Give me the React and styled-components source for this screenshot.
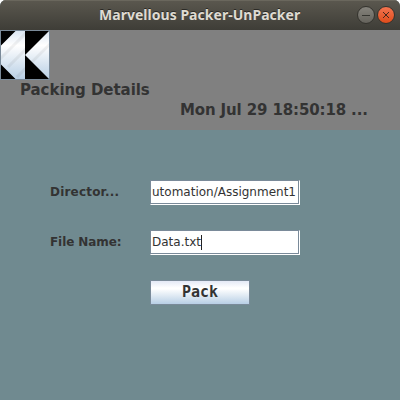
import React from "react";
import styled, { createGlobalStyle } from "styled-components";

const Global = createGlobalStyle`
  * { box-sizing: border-box; }
  body { margin: 0; background: #fff; }
`;

const Window = styled.div`
  width: 400px;
  height: 400px;
  display: flex;
  flex-direction: column;
  overflow: hidden;
  border-radius: 6px 6px 0 0;
  background: #708a90;
  color: #333;
  font-family: "DejaVu Sans", sans-serif;
`;

const TitleBar = styled.header`
  height: 30px;
  flex: none;
  display: grid;
  grid-template-columns: 99px 1fr auto;
  align-items: center;
  padding-right: 5px;
  background: linear-gradient(#5b584f, #3e3d37);
  box-shadow: inset 0 1px #6a675d;
`;

const Title = styled.h1`
  grid-column: 2;
  margin: 0;
  font: bold 14px/20px "Noto Sans", sans-serif;
  letter-spacing: 0.03px;
  white-space: nowrap;
  color: #dfdbd2;
  text-shadow: 0 -1px #2b2a26;
`;

const Controls = styled.div`
  display: flex;
  gap: 2px;
`;

const Control = styled.button`
  width: 18px;
  height: 18px;
  padding: 0;
  border: 1px solid #34332e;
  border-radius: 50%;
  background: ${(p) => (p.$close ? "linear-gradient(#f37450, #df4c1b)" : "linear-gradient(#85837c, #65635c)")};
  svg { display: block; }
`;

const Banner = styled.section`
  height: 100px;
  flex: none;
  display: flex;
  flex-direction: column;
  background: #808080;
`;

const BackButton = styled.button`
  width: 50px;
  height: 50px;
  flex: none;
  padding: 0;
  border: 1px solid #7a8a99;
  background: #000;
  svg { display: block; }
`;

const BannerText = styled.div`
  height: 20px;
  margin-left: ${(p) => p.$indent}px;
  font-size: 15px;
  line-height: 20px;
  font-weight: bold;
  letter-spacing: ${(p) => p.$tracking || 0}px;
  white-space: nowrap;
`;

const Form = styled.form`
  display: grid;
  grid-template-columns: 100px 150px;
  grid-auto-rows: 25px;
  row-gap: 25px;
  padding: 50px 0 0 50px;
`;

const Label = styled.label`
  font-size: 12px;
  line-height: 25px;
  font-weight: bold;
  letter-spacing: ${(p) => p.$tracking || 0}px;
  white-space: nowrap;
`;

const Field = styled.div`
  height: 25px;
  display: flex;
  align-items: center;
  justify-content: ${(p) => (p.$scrolled ? "flex-end" : "flex-start")};
  overflow: hidden;
  padding: 0 3px 0 1px;
  border: 1px solid #fff;
  border-top-color: #7a8a99;
  border-left-color: #7a8a99;
  background: #fff;
  box-shadow: inset -1px -1px #7a8a99;
  font-size: 12px;
  line-height: 23px;
  white-space: nowrap;
`;

const Caret = styled.span`
  width: 1px;
  height: 15px;
  background: #222;
`;

const PackButton = styled.button`
  grid-column: 2;
  width: 100px;
  height: 25px;
  padding: 0;
  border: 1px solid #7a8a99;
  background: linear-gradient(#e4e9f6, #fff 30%, #fff 34%, #b8cfe5);
  color: #333;
  font: bold 15px/23px "DejaVu Sans Mono", monospace;
`;

function RewindIcon() {
  return (
    <svg width="48" height="48" viewBox="0 0 48 48">
      <defs>
        <linearGradient id="steel" x1="0" y1="0" x2="0" y2="48" gradientUnits="userSpaceOnUse">
          <stop offset="0" stopColor="#dce7f3" />
          <stop offset=".3" stopColor="#fff" />
          <stop offset="1" stopColor="#b8cfe5" />
        </linearGradient>
        <clipPath id="arrows">
          <path d="M14.500 0H24V48H14.500L0 33.500V14.500ZM48 0V48L24 24Z" />
        </clipPath>
      </defs>
      <g clipPath="url(#arrows)">
        <path fill="url(#steel)" d="M0 0H48V48H0Z" />
        <path stroke="#333" strokeOpacity=".07" strokeWidth="3" d="M-2 29L27 0M7 36L43 0M16 46L54 8" />
      </g>
    </svg>
  );
}

export default function App() {
  return (
    <>
      <Global />
      <Window>
        <TitleBar>
          <Title>Marvellous Packer-UnPacker</Title>
          <Controls>
            <Control aria-label="Minimize">
              <svg width="16" height="16"><path d="M4 8.500H12" stroke="#353530" /></svg>
            </Control>
            <Control $close aria-label="Close">
              <svg width="16" height="16"><path d="M5 5L11 11M11 5L5 11" stroke="#45281d" /></svg>
            </Control>
          </Controls>
        </TitleBar>
        <Banner>
          <BackButton aria-label="Back"><RewindIcon /></BackButton>
          <BannerText $indent={20} $tracking={-0.05}>Packing Details</BannerText>
          <BannerText $indent={180} $tracking={-0.13}>Mon Jul 29 18:50:18 ...</BannerText>
        </Banner>
        <Form>
          <Label $tracking={0.2}>Director...</Label>
          <Field $scrolled>utomation/Assignment1</Field>
          <Label $tracking={-0.08}>File Name:</Label>
          <Field>Data.txt<Caret /></Field>
          <PackButton type="button">Pack</PackButton>
        </Form>
      </Window>
    </>
  );
}
